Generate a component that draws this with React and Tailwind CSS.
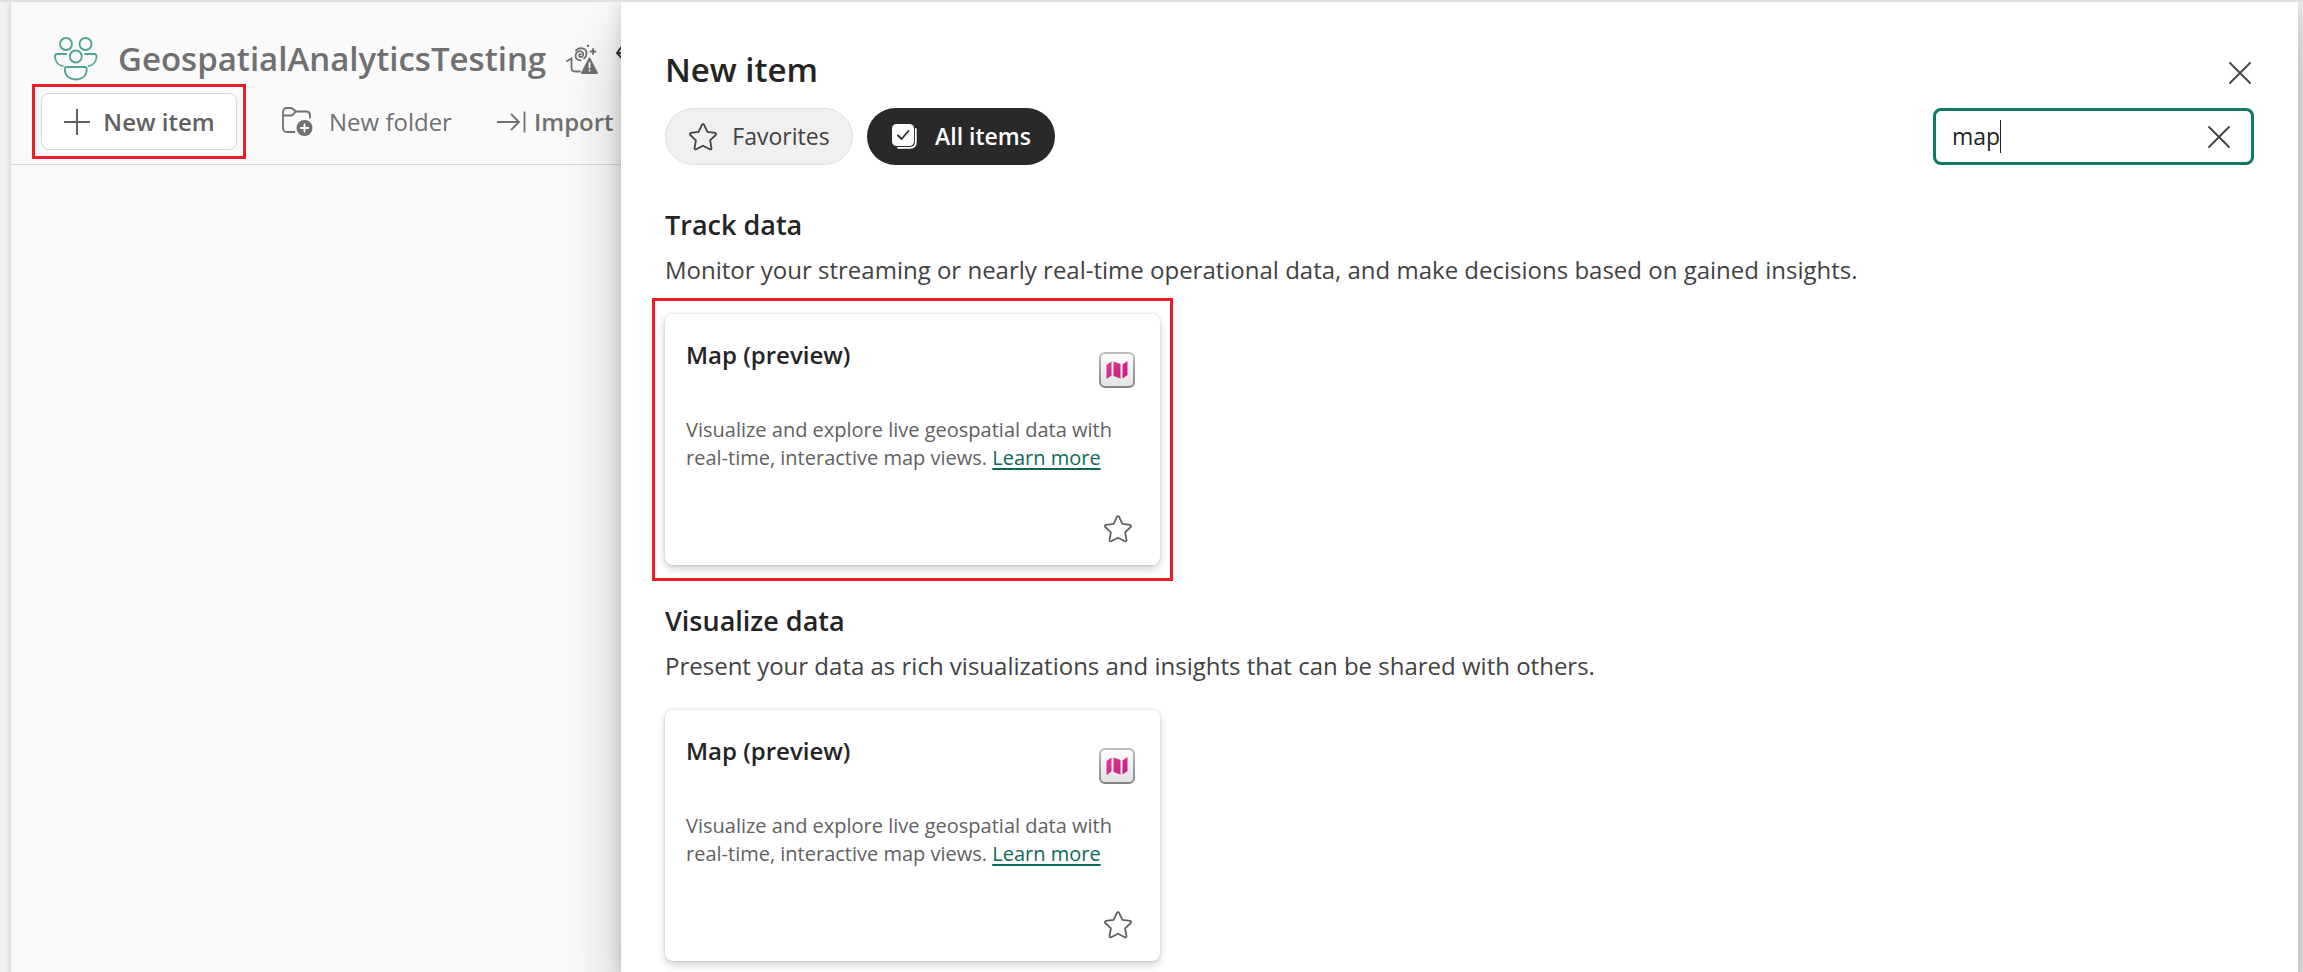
const STAR =
  "M15 2.2c.5 0 .9.3 1.1.7l3.3 7 7.6 1c1 .2 1.5 1.300.7 2.100l-5.600 5.300 1.400 7.700c.2 1-.8 1.700-1.700 1.300L15 23.700l-6.800 3.600c-.9.4-1.900-.3-1.700-1.300l1.400-7.700-5.600-5.300c-.8-.8-.3-1.900.7-2.100l7.600-1 3.300-7c.2-.4.6-.7 1.100-.7z";

function StarIcon() {
  return (
    <svg className="size-[30px] shrink-0" viewBox="0 0 30 30" fill="none" stroke="currentColor" strokeWidth="1.8" strokeLinejoin="round" aria-hidden="true">
      <path d={STAR} />
    </svg>
  );
}

function CloseIcon() {
  return (
    <svg className="size-6 shrink-0" viewBox="0 0 24 24" fill="none" stroke="currentColor" strokeWidth="1.8" strokeLinecap="round" aria-hidden="true">
      <path d="M2 2l20 20M22 2L2 22" />
    </svg>
  );
}

function TeamIcon() {
  return (
    <svg className="size-11 shrink-0 text-[#4fa393]" viewBox="0 0 44 44" fill="none" stroke="currentColor" strokeWidth="1.800" aria-hidden="true">
      <circle cx="12" cy="7" r="6" />
      <circle cx="31.500" cy="7" r="6" />
      <circle cx="21.800" cy="19.500" r="6" />
      <path d="M13 17H3.200C2 17 1 18 1 19.200c0 5.500 3.500 9.300 8.500 10" />
      <path d="M30.500 17h9.800c1.200 0 2.200 1 2.200 2.200 0 5.500-3.500 9.300-8.500 10" />
      <path d="M13 30h17.500c1.200 0 2.200 1 2.200 2.200C32.700 38.500 28.500 42.500 21.800 42.500S10.800 38.500 10.800 32.200C10.800 31 11.800 30 13 30z" />
    </svg>
  );
}

function PlusIcon() {
  return (
    <svg className="size-7 shrink-0" viewBox="0 0 28 28" fill="none" stroke="currentColor" strokeWidth="2" aria-hidden="true">
      <path d="M14 1v26M1 14h26" />
    </svg>
  );
}

function FolderAddIcon() {
  return (
    <svg className="size-8 shrink-0" viewBox="0 0 32 32" fill="none" stroke="currentColor" strokeWidth="1.800" aria-hidden="true">
      <path d="M14 26H6c-2.500 0-4-1.500-4-4V6c0-2.500 1.500-4 4-4h3.500c1 0 1.800.4 2.500 1l2.800 2.500H25c2.500 0 4 1.500 4 4v3" />
      <path d="M2 9.500h7.500c1 0 1.800-.4 2.500-1l2.800-3" />
      <circle cx="23.500" cy="22" r="8" fill="currentColor" stroke="none" />
      <path d="M23.500 17.500v9M19 22h9" stroke="#fafafa" />
    </svg>
  );
}

function ImportIcon() {
  return (
    <svg className="h-6 w-[30px] shrink-0" viewBox="0 0 30 24" fill="none" stroke="currentColor" strokeWidth="1.800" aria-hidden="true">
      <path d="M1 12h22M15 4l8 8-8 8M28.500 1.500v21" />
    </svg>
  );
}

function CopilotAlertIcon() {
  return (
    <svg className="size-8 shrink-0" viewBox="0 0 32 32" fill="none" stroke="currentColor" strokeWidth="1.800" strokeLinecap="round" aria-hidden="true">
      <path d="M1 18l4.500-2.500V25c0 2.500 1.200 3.500 3.500 3.500h5" />
      <path d="M14.800 11.200c-1.600-.6-2.600 2.300-.4 2.700 3.300.5 4.300-5.400-.2-5.700-6-.2-6.500 9.200.4 9.200" />
      <path d="M10 7.500c2.500-3.600 11-3 10.500 3.500-.1 2-1 3.500-2.500 4.500" />
      <path d="M27 6v5M24.500 8.500h5" />
      <circle cx="22" cy="2.800" r="1.200" fill="currentColor" stroke="none" />
      <path d="M23.500 15.500L31 30H16z" fill="currentColor" strokeLinejoin="round" />
      <path d="M23.500 20v4.500M23.500 27.500v.2" stroke="#fafafa" />
    </svg>
  );
}

function DiamondIcon() {
  return (
    <svg className="size-6 shrink-0 text-[#333]" viewBox="0 0 24 24" fill="none" stroke="currentColor" strokeWidth="2" strokeLinejoin="round" aria-hidden="true">
      <path d="M7 2h10l6 8-11 12L1 10zM1 10h22M7 2l5 20 5-20" />
    </svg>
  );
}

function AllItemsIcon() {
  return (
    <svg className="size-7 shrink-0" viewBox="0 0 28 28" fill="none" aria-hidden="true">
      <rect x="1" y="1" width="22" height="22" rx="4.500" fill="#fff" />
      <path d="M24.800 6v13c0 3.600-2.200 5.800-5.800 5.800H7" stroke="#fff" strokeWidth="1.800" strokeLinecap="round" />
      <path d="M7 12.500l3.500 3.500 7-8" stroke="#292929" strokeWidth="1.800" strokeLinecap="round" />
    </svg>
  );
}

function MapIcon() {
  return (
    <svg className="size-9 shrink-0" viewBox="0 0 36 36" aria-hidden="true">
      <defs>
        <linearGradient id="tile" x1="0" y1="0" x2="0" y2="1">
          <stop offset="0" stopColor="#fdfdfd" />
          <stop offset="1" stopColor="#e2e2e2" />
        </linearGradient>
        <linearGradient id="edge" x1="0" y1="0" x2="0" y2="1">
          <stop offset="0" stopColor="#bdbdbd" />
          <stop offset="1" stopColor="#858585" />
        </linearGradient>
        <linearGradient id="pink" x1="0" y1="0" x2="1" y2="1">
          <stop offset="0" stopColor="#e03a95" />
          <stop offset="1" stopColor="#bf1d78" />
        </linearGradient>
      </defs>
      <rect x="1" y="1" width="34" height="34" rx="5" fill="url(#tile)" stroke="url(#edge)" strokeWidth="2" />
      <path d="M7.500 13l5-3.500v14l-5 3.500zM14.500 9.500l7 2.500v14.500l-7-2.500zM23.500 12.500l5-3.500v14l-5 3.500z" fill="url(#pink)" />
    </svg>
  );
}

function ItemCard() {
  return (
    <article className="flex h-[251px] w-[495px] flex-col rounded-lg bg-white px-[21px] pt-[23px] shadow-[0_0_3px_rgba(0,0,0,0.14),0_4px_8px_rgba(0,0,0,0.18)]">
      <div className="flex items-start justify-between pr-1">
        <h3 className="text-2xl leading-9 font-semibold text-[#242424]">Map (preview)</h3>
        <div className="pt-[15px]">
          <MapIcon />
        </div>
      </div>
      <p className="mt-7 text-xl leading-[28px] text-[#616161]">
        Visualize and explore live geospatial data with
        <br />
        real-time, interactive map views.{" "}
        <a href="#learn-more" className="text-[#0c695a] underline decoration-2 underline-offset-3">Learn more</a>
      </p>
      <button type="button" aria-label="Add to favorites" className="mt-[42px] mr-[6px] self-end text-[#616161]">
        <StarIcon />
      </button>
    </article>
  );
}

function ItemSection({ title, description, highlighted }) {
  return (
    <section className="flex flex-col">
      <h2 className="text-[27px] leading-10 font-semibold text-[#242424]">{title}</h2>
      <p className="mt-[7px] text-2xl leading-9 text-[#424242]">{description}</p>
      <div className={highlighted ? "mt-[10px] -ml-[13px] w-fit border-3 border-[#ee1c25] px-[10px] py-[13px]" : "mt-[10px] w-fit py-4"}>
        <ItemCard />
      </div>
    </section>
  );
}

export default function App() {
  return (
    <div className="flex min-h-screen overflow-hidden border-t-2 border-[#e0e0e0] bg-[#f2f2f2] pl-[11px] font-['Open_Sans','Noto_Sans',sans-serif]">
      <main className="w-[610px] shrink-0 overflow-hidden bg-[#fafafa] shadow-[0_0_6px_rgba(0,0,0,0.2)]">
        <header className="flex h-[163px] flex-col border-b border-[#d8d8d8] pt-8 whitespace-nowrap text-[#707070]">
          <div className="flex h-[50px] items-center pl-[43px]">
            <TeamIcon />
            <h1 className="ml-5 text-[33px] font-semibold">GeospatialAnalyticsTesting</h1>
            <div className="ml-5 flex gap-[18px]">
              <CopilotAlertIcon />
              <DiamondIcon />
            </div>
          </div>
          <div className="flex items-center pl-[21px] text-2xl">
            <div className="border-3 border-[#ee1c25] px-[6px] py-[6px]">
              <button type="button" className="flex h-[57px] w-[196px] items-center justify-center gap-3 rounded-lg border border-[#d6d6d6] bg-white font-semibold text-[#616161]">
                <PlusIcon />
                New item
              </button>
            </div>
            <button type="button" className="ml-[35px] flex items-center gap-4">
              <FolderAddIcon />
              New folder
            </button>
            <button type="button" className="ml-11 flex items-center gap-2 font-semibold">
              <ImportIcon />
              Import
            </button>
          </div>
        </header>
      </main>

      <aside className="z-10 mr-[5px] min-w-0 flex-1 bg-white pt-11 pr-11 pl-11 shadow-[0_0_14px_rgba(0,0,0,0.16),0_32px_56px_rgba(0,0,0,0.22)]">
        <div className="flex items-center justify-between">
          <h1 className="text-[33px] leading-[48px] font-semibold text-[#242424]">New item</h1>
          <button type="button" aria-label="Close" className="mt-1.5 mr-[2px] text-[#424242]">
            <CloseIcon />
          </button>
        </div>
        <div className="mt-[14px] flex items-center justify-between">
          <div className="flex gap-[14px] text-[23px]">
            <button type="button" className="flex h-[57px] w-[188px] items-center justify-center gap-[14px] rounded-full border border-[#e0e0e0] bg-[#f0f0f0] text-[#424242]">
              <StarIcon />
              Favorites
            </button>
            <button type="button" className="flex h-[57px] w-[188px] items-center justify-center gap-4 rounded-full bg-[#292929] font-semibold text-white">
              <AllItemsIcon />
              All items
            </button>
          </div>
          <div className="flex h-[57px] w-[321px] items-center rounded-lg border-3 border-[#117865] pr-5 pl-4">
            <input
              type="text"
              aria-label="Search items"
              defaultValue="map"
              className="field-sizing-content max-w-[240px] bg-transparent text-[23px] text-[#242424] caret-transparent outline-none"
            />
            <span className="h-[33px] w-px bg-[#242424]" aria-hidden="true" />
            <button type="button" aria-label="Clear search" className="ml-auto text-[#424242]">
              <CloseIcon />
            </button>
          </div>
        </div>
        <div className="mt-10 flex flex-col gap-5">
          <ItemSection title="Track data" description="Monitor your streaming or nearly real-time operational data, and make decisions based on gained insights." highlighted />
          <ItemSection title="Visualize data" description="Present your data as rich visualizations and insights that can be shared with others." />
        </div>
      </aside>
    </div>
  );
}
